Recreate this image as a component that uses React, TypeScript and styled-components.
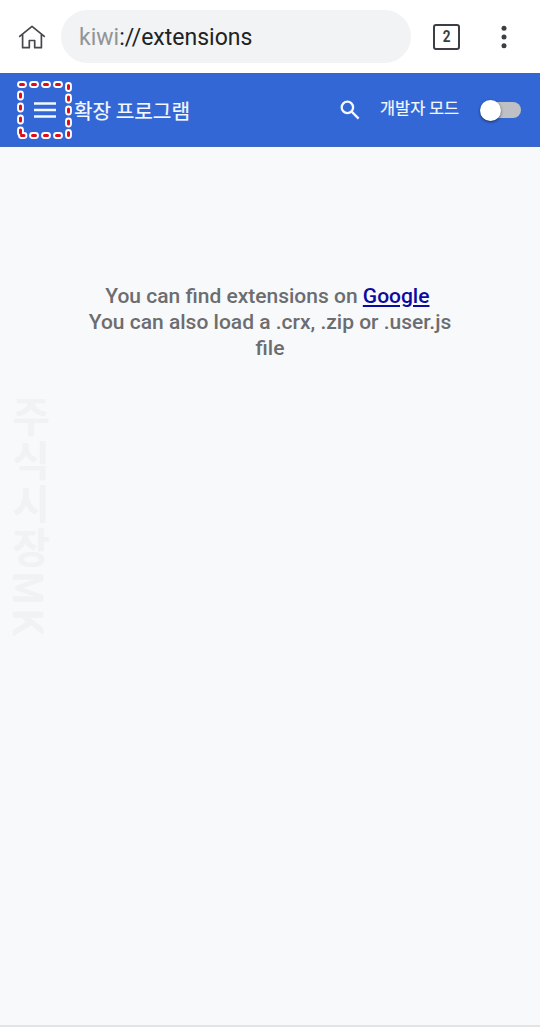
import React from 'react';
import styled, { createGlobalStyle } from 'styled-components';

const GlobalStyle = createGlobalStyle`
  * { box-sizing: border-box; }
  html, body { margin: 0; padding: 0; }
  body { background: #fff; }
`;

const Page = styled.div`
  width: 540px;
  height: 1035px;
  display: flex;
  flex-direction: column;
  background: #fff;
  overflow: hidden;
  font-family: Roboto, 'Noto Sans CJK KR', sans-serif;
`;

const BrowserBar = styled.header`
  height: 73px;
  flex: none;
  display: flex;
  align-items: center;
  padding: 0 24px 0 18px;
`;

const HomeIcon = styled.svg`
  width: 28px;
  height: 26px;
  flex: none;
`;

const AddressField = styled.div`
  width: 350px;
  height: 53px;
  margin-left: 15px;
  padding: 3px 0 0 18px;
  border-radius: 27px;
  background: #f1f3f5;
  display: flex;
  align-items: center;
  font-size: 23px;
  line-height: 28px;
  color: #202225;
  white-space: pre;
`;

const Scheme = styled.span`
  color: #929496;
`;

const TabCount = styled.div`
  width: 27px;
  height: 26px;
  margin-left: 22px;
  border: 2px solid #3b3e42;
  border-radius: 3px;
  display: flex;
  align-items: center;
  justify-content: center;
  font: 700 16px/22px 'Roboto', sans-serif;
  color: #3b3e42;
`;

const Digit = styled.span`
  transform: scaleX(0.85);
`;

const MoreIcon = styled.svg`
  width: 8px;
  height: 24px;
  margin-left: 40px;
`;

const Toolbar = styled.div`
  height: 74px;
  flex: none;
  display: flex;
  align-items: center;
  padding-right: 18px;
  background: #3367d6;
  border-top: 1px solid #3c66b8;
  border-bottom: 1px solid #4169c0;
  color: #f3f9ff;
`;

const MenuButton = styled.div`
  position: relative;
  width: 74px;
  height: 72px;
  display: flex;
  align-items: center;
  padding-left: 34px;
`;

const MenuIcon = styled.svg`
  width: 22px;
  height: 18px;
`;

const Highlight = styled.svg`
  position: absolute;
  left: 14px;
  top: 4px;
  width: 62px;
  height: 64px;
`;

const Title = styled.h1`
  margin: 0;
  padding-top: 1px;
  width: 266px;
  font: 400 20.2px/28px 'Noto Sans CJK KR', sans-serif;
  -webkit-text-stroke: 0.2px currentColor;
  white-space: nowrap;
`;

const SearchIcon = styled.svg`
  width: 20px;
  height: 20px;
`;

const ModeLabel = styled.span`
  width: 100px;
  margin-left: 20px;
  padding-bottom: 6px;
  font: 400 16.4px/24px 'Noto Sans CJK KR', sans-serif;
  -webkit-text-stroke: 0.2px currentColor;
  white-space: nowrap;
`;

const Track = styled.div`
  width: 39px;
  height: 16px;
  margin-left: 2px;
  border-radius: 8px;
  background: #bfc0c4;
  display: flex;
  align-items: center;
`;

const Knob = styled.div`
  width: 21px;
  height: 21px;
  flex: none;
  margin-left: -2px;
  border-radius: 50%;
  background: #fff;
  box-shadow: 0 1px 3px rgba(0, 0, 0, 0.55);
`;

const Content = styled.main`
  height: 880px;
  flex: none;
  display: flex;
  flex-direction: column;
  align-items: center;
  background: #f8f9fb;
  border-bottom: 2px solid #e2e3e4;
`;

const Message = styled.p`
  margin: 136px 0 0;
  width: 380px;
  text-align: center;
  font: 500 21px/26.2px Roboto, sans-serif;
  color: #6c6d6f;
`;

const Link = styled.a`
  color: #0b0b9f;
  text-decoration: underline;
`;

const Watermark = styled.div`
  align-self: flex-start;
  margin: 34px 0 0 6px;
  writing-mode: vertical-rl;
  font: 700 41px/50px 'Noto Sans CJK KR', sans-serif;
  letter-spacing: 2.6px;
  color: #f1f2f4;
  white-space: nowrap;
`;

const dashes = [
  'M20.5 84.5h3', 'M32.5 84.5h3', 'M44.5 84.5h3', 'M56.5 84.5h3',
  'M68.5 85.5v3', 'M68.5 97v3', 'M68.5 109v3', 'M68.5 121v3', 'M68.5 132.5v3',
  'M20.5 94v3', 'M20.5 106v3', 'M20.5 118v3', 'M20.5 130v3',
  'M21.5 135.5h2.5', 'M32.5 135.5h3', 'M44.5 135.5h3', 'M56.5 135.5h3',
].join('');

export default function App() {
  return (
    <>
      <GlobalStyle />
      <Page>
        <BrowserBar>
          <HomeIcon viewBox="0 0 28 26" fill="none" stroke="#46484b" strokeWidth="1.7" strokeLinejoin="round" strokeLinecap="round">
            <path d="M1.7 12.4 14 2.4l12.3 10M4.6 10.5v13.2h6.7v-7.2h5.4v7.2h6.7V10.5" />
          </HomeIcon>
          <AddressField><Scheme>kiwi</Scheme>://extensions</AddressField>
          <TabCount><Digit>2</Digit></TabCount>
          <MoreIcon viewBox="0 0 8 24" fill="#3b3e42">
            <circle cx="4" cy="3.2" r="2.5" />
            <circle cx="4" cy="12" r="2.5" />
            <circle cx="4" cy="20.8" r="2.5" />
          </MoreIcon>
        </BrowserBar>
        <Toolbar>
          <MenuButton>
            <MenuIcon viewBox="0 0 22 18" stroke="#f3f9ff" strokeWidth="2.7">
              <path d="M0 2.5h22M0 9h22M0 15.5h22" />
            </MenuIcon>
            <Highlight viewBox="14 78 62 64" fill="none" strokeLinecap="round">
              <path d={dashes} stroke="#fff" strokeWidth="6.8" />
              <path d={dashes} stroke="#e30b17" strokeWidth="3" />
            </Highlight>
          </MenuButton>
          <Title>확장 프로그램</Title>
          <SearchIcon viewBox="0 0 20 20" fill="none" stroke="#f3f9ff" strokeWidth="2.3">
            <circle cx="7.4" cy="7.4" r="5.7" />
            <path d="m11.6 11.6 7 7" />
          </SearchIcon>
          <ModeLabel>개발자 모드</ModeLabel>
          <Track><Knob /></Track>
        </Toolbar>
        <Content>
          <Message>
            You can find extensions on <Link>Google</Link>&nbsp;
            <br />
            You can also load a .crx, .zip or .user.js file
          </Message>
          <Watermark>주식시장MK</Watermark>
        </Content>
      </Page>
    </>
  );
}
